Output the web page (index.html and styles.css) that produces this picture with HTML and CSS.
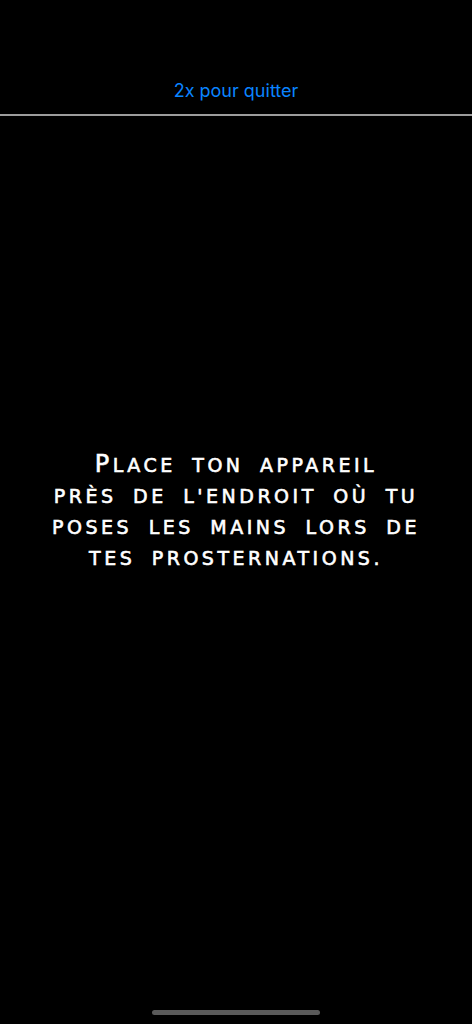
FILE: index.html
```html
<!DOCTYPE html>
<html>
<head>
    <title>Prosternations</title>
    <link rel="stylesheet" href="styles.css">
</head>
<body>
    <div class="header">
        <span class="quit">2x pour quitter</span>
    </div>

    <div class="main">
        <p class="message">Place ton appareil<br>près de l'endroit où tu<br>poses les mains lors de<br>tes prosternations.</p>
    </div>

    <div class="home-bar"></div>
</body>
</html>
```

FILE: styles.css
```css
html, body {
    margin: 0;
    height: 100%;
}

body {
    background-color: #000;
    display: flex;
    flex-direction: column;
}

.header {
    height: 116px;
    box-sizing: border-box;
    padding-top: 79px;
    text-align: center;
    border-bottom: 2px solid #9c9c9c;
}

.quit {
    font-family: "Inter", "Liberation Sans", sans-serif;
    font-size: 18px;
    color: #0a84ff;
    line-height: 24px;
}

.main {
    flex: 1;
    display: flex;
    align-items: center;
    justify-content: center;
    padding: 0 0 104px;
}

.message {
    margin: 0;
    text-align: center;
    color: #fff;
    font-family: "DejaVu Sans", sans-serif;
    font-size: 19px;
    text-transform: uppercase;
    letter-spacing: 3.5px;
    word-spacing: 7px;
    line-height: 31px;
    -webkit-text-stroke: 0.6px #fff;
}

.message::first-letter {
    font-size: 24px;
}

.home-bar {
    width: 168px;
    height: 5px;
    border-radius: 3px;
    background-color: #5a5a5a;
    margin: 0 auto 9px;
}
```
